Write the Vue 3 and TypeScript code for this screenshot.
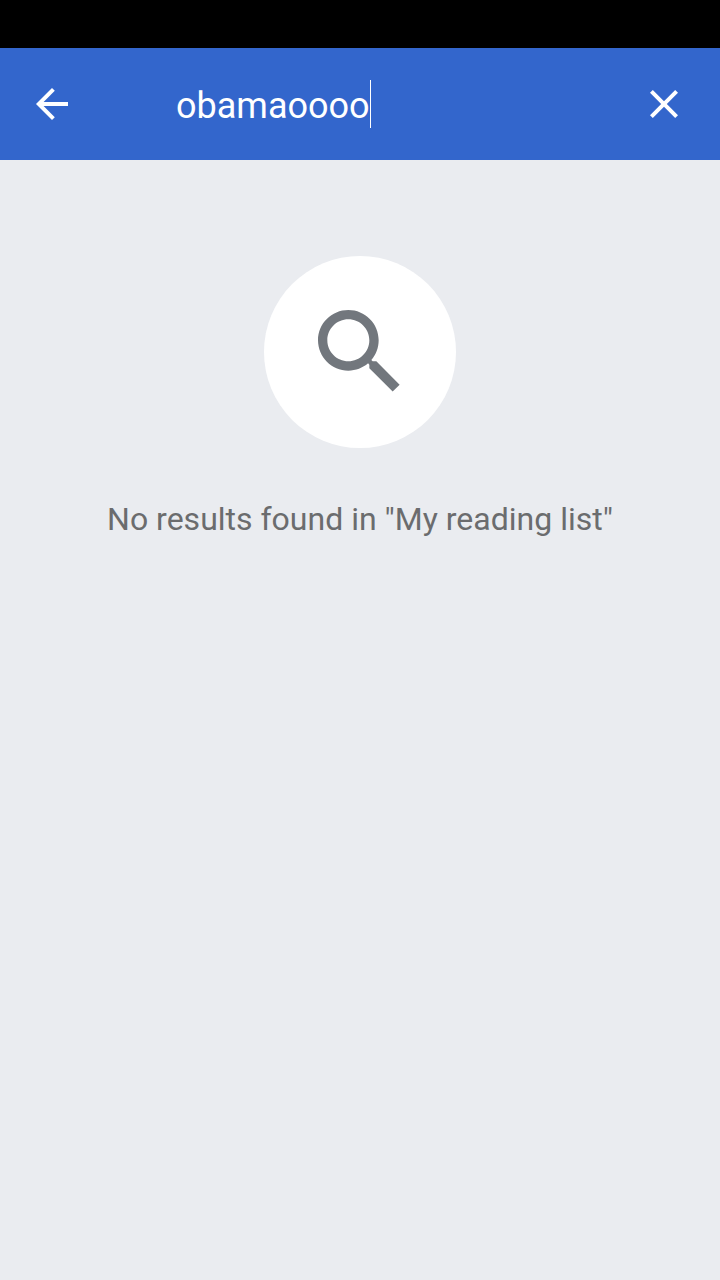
<script setup lang="ts">
import { ref } from 'vue'

const query = ref('obamaoooo')
const listName = 'My reading list'

function clearQuery(): void {
  query.value = ''
}
</script>

<template>
  <div class="screen">
    <div class="status-bar"></div>
    <header class="toolbar">
      <button class="icon-button" type="button" aria-label="Back">
        <svg viewBox="0 0 24 24" aria-hidden="true">
          <path d="M20 11H7.8l5.6-5.6L12 4l-8 8 8 8 1.4-1.4L7.8 13H20z" />
        </svg>
      </button>
      <div class="search-field">
        <input v-model="query" class="search-input" type="text" aria-label="Search" spellcheck="false" />
        <span class="caret"></span>
      </div>
      <button class="icon-button clear-button" type="button" aria-label="Clear query" @click="clearQuery">
        <svg viewBox="0 0 24 24" aria-hidden="true">
          <path d="M19 6.41L17.59 5 12 10.59 6.41 5 5 6.41 10.59 12 5 17.59 6.41 19 12 13.41 17.59 19 19 17.59 13.41 12z" />
        </svg>
      </button>
    </header>
    <main class="empty-state">
      <div class="badge">
        <svg viewBox="0 0 24 24" aria-hidden="true">
          <path d="M15.5 14h-.79l-.28-.27C15.41 12.59 16 11.11 16 9.5 16 5.91 13.09 3 9.5 3S3 5.91 3 9.5 5.91 16 9.5 16c1.61 0 3.09-.59 4.23-1.57l.27.28v.79l5 4.99L20.49 19l-4.99-5zm-6 0C7.01 14 5 11.99 5 9.5S7.01 5 9.5 5 14 7.01 14 9.5 11.99 14 9.5 14z" />
        </svg>
      </div>
      <p class="message">No results found in "{{ listName }}"</p>
    </main>
  </div>
</template>

<style>
body {
  margin: 0;
  background: #eaecf0;
}
</style>

<style scoped>
.screen {
  display: flex;
  flex-direction: column;
  min-height: 100vh;
  background: #eaecf0;
  font-family: Roboto, "Noto Sans", sans-serif;
}

.status-bar {
  height: 48px;
  background: #000;
}

.toolbar {
  display: flex;
  align-items: center;
  height: 112px;
  background: #3366cc;
  color: #fff;
}

.icon-button {
  display: flex;
  flex: none;
  align-items: center;
  justify-content: center;
  width: 104px;
  height: 112px;
  padding: 0;
  border: 0;
  background: none;
  color: inherit;
}

.clear-button {
  width: 112px;
}

.icon-button svg {
  width: 48px;
  height: 48px;
  fill: currentColor;
}

.search-field {
  display: flex;
  flex: 1;
  align-items: center;
  min-width: 0;
  padding-left: 72px;
}

.search-input {
  box-sizing: border-box;
  field-sizing: content;
  min-width: 0;
  height: 48px;
  padding: 4px 0 0;
  border: 0;
  outline: 0;
  background: none;
  color: inherit;
  caret-color: transparent;
  font: 400 36px/44px Roboto, "Noto Sans", sans-serif;
}

.caret {
  flex: none;
  width: 1px;
  height: 48px;
  background: #fff;
}

.empty-state {
  display: flex;
  flex-direction: column;
  align-items: center;
  padding: 96px 32px;
}

.badge {
  display: flex;
  align-items: center;
  justify-content: center;
  width: 192px;
  height: 192px;
  border-radius: 50%;
  background: #fff;
}

.badge svg {
  width: 112px;
  height: 112px;
  fill: #72777d;
}

.message {
  margin: 48px 0 0;
  color: #6b6c6e;
  font-size: 32px;
  line-height: 46px;
  text-align: center;
}
</style>
